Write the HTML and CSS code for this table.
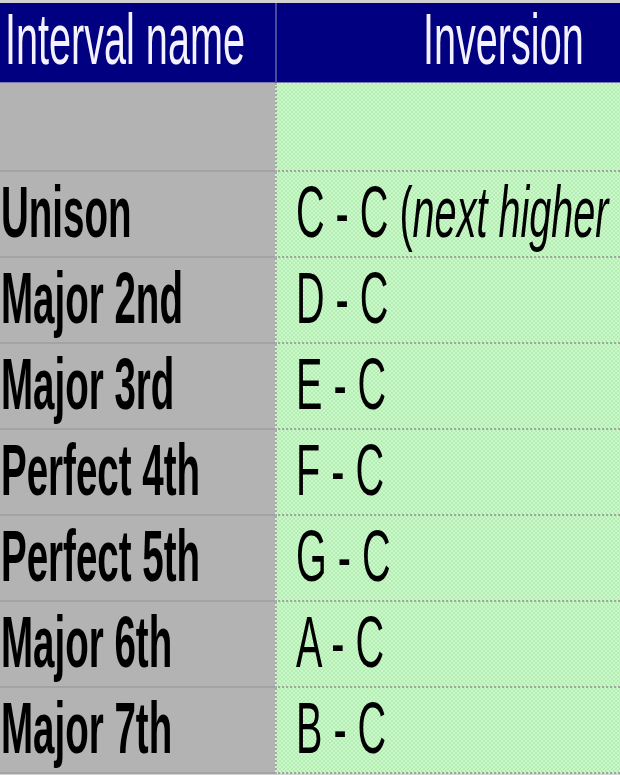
FILE: index.html
```html
<!DOCTYPE html>
<html>
<head>
<meta charset="utf-8">
<link rel="stylesheet" href="styles.css">
</head>
<body>
<div class="sheet">
  <div class="cell head name"><span class="txt">Interval name</span></div>
  <div class="cell head inv"><span class="txt">Inversion</span></div>

  <div class="cell name blank"></div>
  <div class="cell inv blank"></div>

  <div class="cell name"><span class="txt bold">Unison</span></div>
  <div class="cell inv"><span class="txt">C - C (<em>next higher</em></span></div>

  <div class="cell name"><span class="txt bold">Major 2nd</span></div>
  <div class="cell inv"><span class="txt">D - C</span></div>

  <div class="cell name"><span class="txt bold">Major 3rd</span></div>
  <div class="cell inv"><span class="txt">E - C</span></div>

  <div class="cell name"><span class="txt bold">Perfect 4th</span></div>
  <div class="cell inv"><span class="txt">F - C</span></div>

  <div class="cell name"><span class="txt bold">Perfect 5th</span></div>
  <div class="cell inv"><span class="txt">G - C</span></div>

  <div class="cell name"><span class="txt bold">Major 6th</span></div>
  <div class="cell inv"><span class="txt">A - C</span></div>

  <div class="cell name"><span class="txt bold">Major 7th</span></div>
  <div class="cell inv"><span class="txt">B - C</span></div>
</div>
</body>
</html>
```

FILE: styles.css
```css
html, body {
  margin: 0;
  padding: 0;
}

body {
  background: #d2d2d2;
  padding-top: 3px;
  overflow: hidden;
  font-family: "Liberation Sans", Arial, sans-serif;
}

.sheet {
  display: grid;
  grid-template-columns: 275px 1fr;
  grid-template-rows: 80px 89px repeat(7, 86px);
  width: 620px;
}

.cell {
  box-sizing: border-box;
  display: flex;
  align-items: center;
  white-space: nowrap;
  font-size: 72px;
  line-height: 1;
  color: #000;
  padding-bottom: 5px;
  min-width: 0;
}

.cell.name {
  background: #b3b3b3;
  border-bottom: 2px solid #a3a3a3;
  padding-left: 1px;
}

.cell.inv {
  background-color: #c8fbc8;
  background-image: repeating-conic-gradient(#b6ebb6 0 25%, transparent 0 50%);
  background-size: 4px 4px;
  border-bottom: 2px dotted #9da59d;
  border-left: 2px dotted #a6aaa6;
  padding-left: 19px;
}

.cell.head {
  background: #000080;
  color: #f4f2ff;
  border-bottom: 1px solid #7b7bb0;
  padding-bottom: 7px;
}

.cell.head.name {
  padding-left: 5px;
}

.cell.head.inv {
  background: #000080;
  background-image: none;
  border-left: 2px solid #4a4a9c;
  padding-left: 146px;
}

.txt {
  display: inline-block;
  transform: scaleX(0.55);
  transform-origin: left center;
}

.txt.bold {
  font-weight: bold;
  transform: scaleX(0.535);
}

.txt em {
  font-style: italic;
}
```
